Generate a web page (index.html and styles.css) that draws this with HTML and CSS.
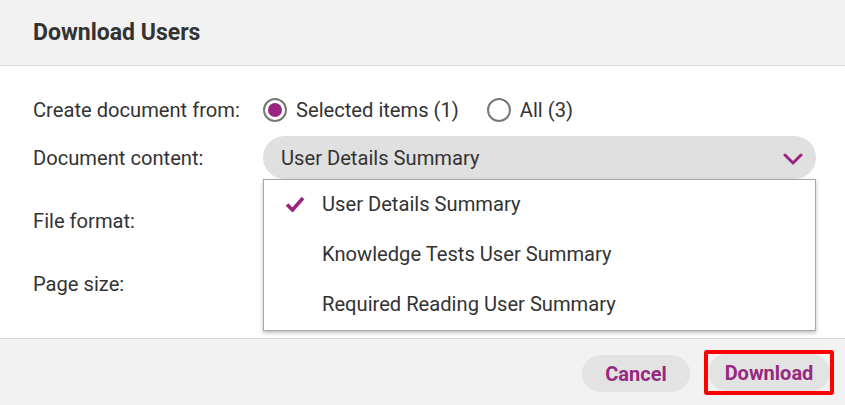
FILE: index.html
```html
<!DOCTYPE html>
<html>
<head>
<meta charset="utf-8">
<link rel="stylesheet" href="styles.css">
</head>
<body>
<div class="dialog">
  <div class="header"><h1 class="title">Download Users</h1></div>
  <div class="content">
    <div class="row row-radio">
      <div class="label">Create document from:</div>
      <div class="radios">
        <label class="radio"><span class="dot checked"></span>Selected items (1)</label>
        <label class="radio"><span class="dot"></span>All (3)</label>
      </div>
    </div>
    <div class="row row-select">
      <div class="label">Document content:</div>
      <div class="select">
        <span>User Details Summary</span>
        <svg class="chev" width="20" height="12" viewBox="0 0 20 12"><path d="M2 2 L10 10 L18 2" fill="none" stroke="#9a2580" stroke-width="3" stroke-linecap="round" stroke-linejoin="round"/></svg>
      </div>
      <div class="menu">
        <div class="item"><svg class="check" width="20" height="16" viewBox="0 0 20 16"><path d="M2 8.5 L7.5 14 L18 2" fill="none" stroke="#9a2580" stroke-width="3.6" stroke-linejoin="miter"/></svg><span>User Details Summary</span></div>
        <div class="item"><span>Knowledge Tests User Summary</span></div>
        <div class="item"><span>Required Reading User Summary</span></div>
      </div>
    </div>
    <div class="row row-plain"><div class="label">File format:</div></div>
    <div class="row row-plain"><div class="label">Page size:</div></div>
  </div>
  <div class="footer">
    <button class="btn">Cancel</button>
    <span class="highlight"><button class="btn btn-dl">Download</button></span>
  </div>
</div>
</body>
</html>
```
FILE: styles.css
```css
* { box-sizing: border-box; }
html, body { margin: 0; padding: 0; }
body {
  width: 845px;
  height: 405px;
  overflow: hidden;
  font-family: Roboto, "Liberation Sans", Arial, sans-serif;
  color: #333333;
  background: #ffffff;
}
.dialog { width: 845px; height: 405px; display: flex; flex-direction: column; }
.header {
  height: 66px;
  background: #f2f2f2;
  border-bottom: 1px solid #d9d9d9;
  padding-left: 33px;
  display: flex;
  align-items: center;
}
.title { margin: 0; font-size: 23px; font-weight: 700; color: #333; padding-bottom: 1px; }
.content {
  height: 272px;
  padding: 24px 29px 0 33px;
  display: flex;
  flex-direction: column;
}
.row { display: flex; align-items: center; position: relative; }
.label { width: 230px; flex: none; font-size: 20.15px; color: #333; }
.row-radio { height: 40px; }
.radios { display: flex; align-items: center; gap: 28px; font-size: 20.15px; }
.radio { display: flex; align-items: center; gap: 9px; }
.dot {
  width: 24px; height: 24px; border-radius: 50%;
  border: 2px solid #777; background: #fff; position: relative; display: inline-block;
}
.dot.checked::after {
  content: ""; position: absolute; left: 3px; top: 3px; width: 14px; height: 14px;
  border-radius: 50%; background: #9a2580;
}
.row-select { height: 43px; margin-top: 6px; }
.select {
  flex: 1;
  height: 43px;
  background: #e0e0e0;
  border-radius: 22px;
  display: flex; align-items: center; justify-content: space-between;
  padding: 0 13px 0 18px;
  font-size: 20.15px; color: #333;
}
.chev { display: block; margin-top: 2px; }
.menu {
  position: absolute;
  left: 230px; top: 43px;
  width: 553px;
  background: #fff;
  border: 1px solid #a8a8a8;
  box-shadow: 0 2px 4px rgba(0,0,0,0.25);
  z-index: 2;
}
.item {
  height: 50px;
  display: flex; align-items: center;
  padding-left: 58px;
  padding-bottom: 3px;
  font-size: 20.15px; color: #333;
  position: relative;
}
.check { position: absolute; left: 21px; top: 16px; }
.row-plain { height: 42px; margin-top: 21px; }
.footer {
  flex: 1;
  background: #f2f2f2;
  border-top: 1px solid #d9d9d9;
  display: flex; align-items: center; justify-content: flex-end;
  padding-right: 11px;
  gap: 14px;
  padding-top: 1px;
}
.btn {
  font-family: Roboto, "Liberation Sans", Arial, sans-serif;
  font-size: 20px; font-weight: 700;
  color: #962a80;
  background: #e3e3e3;
  border: none;
  border-radius: 19px;
  height: 37px;
  width: 108px;
  padding: 0;
  margin-top: 2px;
}
.highlight {
  display: inline-flex;
  border: 4px solid #ff0000;
  border-radius: 3px;
  height: 45px;
  width: 130px;
  align-items: center;
  justify-content: center;
}
.btn-dl { width: 122px; height: 37px; margin-top: 0; }
```
